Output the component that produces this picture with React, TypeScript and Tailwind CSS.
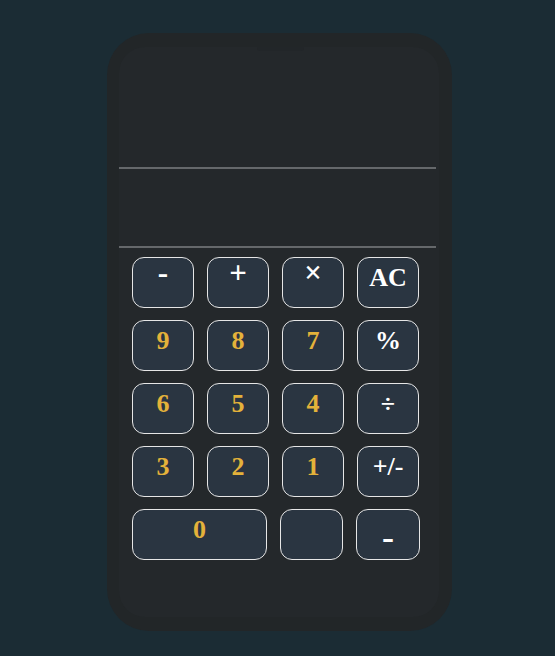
import React from 'react';

const rows: { label: string; digit?: boolean; big?: boolean }[][] = [
  [{ label: '-', big: true }, { label: '+', big: true }, { label: '×', big: true }, { label: 'AC' }],
  [{ label: '9', digit: true }, { label: '8', digit: true }, { label: '7', digit: true }, { label: '%' }],
  [{ label: '6', digit: true }, { label: '5', digit: true }, { label: '4', digit: true }, { label: '÷' }],
  [{ label: '3', digit: true }, { label: '2', digit: true }, { label: '1', digit: true }, { label: '+/-' }],
];

function Key({ label, digit, big, className = '' }: { label: string; digit?: boolean; big?: boolean; className?: string }) {
  return (
    <button
      className={`h-[51px] flex justify-center items-start rounded-[12px] border border-[#e6e6e6] bg-[#2a3541] font-bold ${
        big ? 'text-[31px] leading-[29px]' : 'text-[26px] leading-normal'
      } ${digit ? 'text-[#e4b23a]' : 'text-white'} ${className}`}
    >
      {label}
    </button>
  );
}

export default function App() {
  return (
    <div className="min-h-screen bg-[#1b2c34] pt-[33px] pl-[107px]" style={{ fontFamily: '"Liberation Serif", serif' }}>
      <div className="w-[345px] h-[598px] rounded-[42px] bg-[#222628] pl-[12px] pr-[13px] py-[14px]">
        <div className="relative w-[320px] h-full rounded-[26px] bg-[#24282b]">
          {/* notch */}
          <div className="absolute left-[138px] top-0 w-[47px] h-[4px] rounded-b-[3px] bg-[#222629]" />

          <div className="h-[120px]" />
          <div className="h-[2px] w-[317px] bg-[#65686b]" />
          <div className="h-[77px]" />
          <div className="h-[2px] w-[317px] bg-[#65686b]" />

          <div className="pt-[9px] pl-[13px] flex flex-col gap-[12px]">
            {rows.map((row, i) => (
              <div key={i} className="grid grid-cols-[repeat(4,62px)] gap-x-[13px]">
                {row.map((k) => (
                  <Key key={k.label} label={k.label} digit={k.digit} big={k.big} />
                ))}
              </div>
            ))}
            <div className="flex">
              <Key label="0" digit className="w-[135px]" />
              <Key label="" className="w-[63px] ml-[13px]" />
              <Key label="-" className="w-[64px] ml-[13px] !text-[36px]" />
            </div>
          </div>
        </div>
      </div>
    </div>
  );
}
